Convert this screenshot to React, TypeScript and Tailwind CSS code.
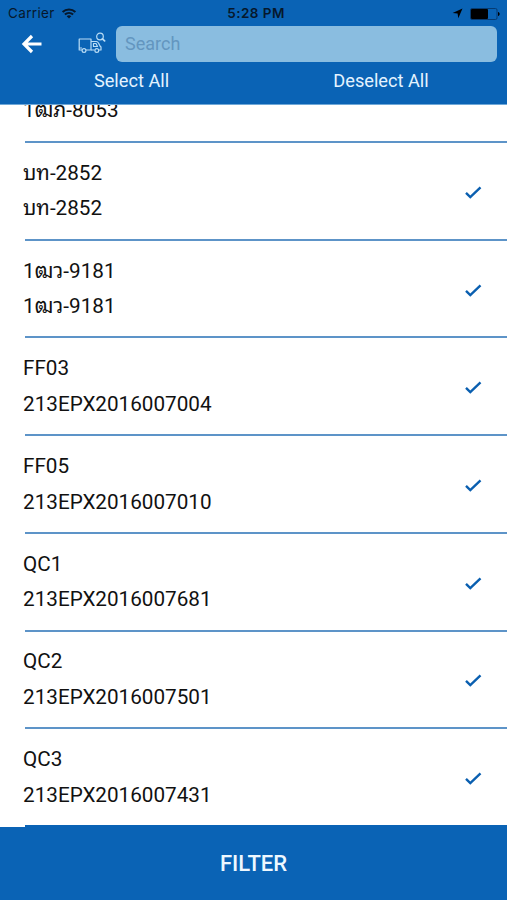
import { useState } from 'react';

type Vehicle = {
    id: number;
    name: string;
    code: string;
};

const vehicles: Vehicle[] = [
    { id: 2, name: 'บท-2852', code: 'บท-2852' },
    { id: 3, name: '1ฒว-9181', code: '1ฒว-9181' },
    { id: 4, name: 'FF03', code: '213EPX2016007004' },
    { id: 5, name: 'FF05', code: '213EPX2016007010' },
    { id: 6, name: 'QC1', code: '213EPX2016007681' },
    { id: 7, name: 'QC2', code: '213EPX2016007501' },
    { id: 8, name: 'QC3', code: '213EPX2016007431' },
];

function StatusBar() {
    return (
        <div className="grid h-[27px] grid-cols-3 items-center pl-[8px] pr-[7px] font-['Inter','Liberation_Sans',sans-serif] text-[13.5px] text-[#06182c]">
            <div className="flex items-center gap-[6px]">
                <span className="tracking-[0.35px]">Carrier</span>
                <svg className="h-[11px] w-[16px]" viewBox="0 0 16 12" fill="none" stroke="currentColor">
                    <path d="M1 4.3a10.2 10.2 0 0 1 14 0" strokeWidth="2.2" />
                    <path d="M3.5 7.1a6.6 6.6 0 0 1 9 0" strokeWidth="2.2" />
                    <path d="M8 11.5 5.5 9a3.6 3.6 0 0 1 5 0z" fill="currentColor" stroke="none" />
                </svg>
            </div>
            <span className="pl-[4px] text-center font-semibold tracking-[0.45px]">5:28 PM</span>
            <div className="flex items-center justify-end gap-[7px] text-black">
                <svg className="h-[11px] w-[11px]" viewBox="0 0 11 11" fill="currentColor">
                    <path d="M10.5.5 6.3 10.3 5.6 5.5.6 4.9z" />
                </svg>
                <svg className="h-[12px] w-[30px]" viewBox="0 0 30 12">
                    <rect x=".5" y=".5" width="26.5" height="11" rx="1.5" fill="none" stroke="#063b72" />
                    <rect x="1" y="1" width="17" height="10" rx="1" fill="currentColor" />
                    <path d="M28 4c2.2.6 2.2 3.4 0 4z" fill="currentColor" />
                </svg>
            </div>
        </div>
    );
}

function TruckSearchIcon() {
    return (
        <svg className="h-[22px] w-[28px]" viewBox="0 0 28 22" fill="none" stroke="#b9dcf5" strokeWidth="1.2" strokeLinejoin="round">
            {/* Truck */}
            <path d="M4 18H1.2V7H13v11H8M1.2 16H4" />
            <path d="M13 9.5h5.500c2 0 2.500 2.500 3.500 4.500l1 1v3h-2M13 18h3.500" />
            <path d="M15.500 11.500h2.500l1.500 3h-4z" />
            <circle cx="6" cy="18.500" r="1.900" />
            <circle cx="18.800" cy="18.500" r="1.900" />
            {/* Magnifier */}
            <circle cx="22" cy="4.500" r="3.300" />
            <path d="m24.400 6.900 2.200 2" strokeWidth="1.800" strokeLinecap="round" />
        </svg>
    );
}

function CheckIcon() {
    return (
        <svg className="h-[13px] w-[17px]" viewBox="0 0 17 13" fill="none" stroke="#0a5fb0" strokeWidth="2.4">
            <path d="m1 6.8 4.3 4.2L15.5 1.3" />
        </svg>
    );
}

export default function App() {
    const [search, setSearch] = useState('');
    const [selected, setSelected] = useState<number[]>(vehicles.map((v) => v.id));

    const toggle = (id: number) => {
        setSelected((prev) => (prev.includes(id) ? prev.filter((x) => x !== id) : [...prev, id]));
    };

    return (
        <div className="flex h-[900px] w-[507px] flex-col overflow-hidden bg-white font-['Roboto','Noto_Sans_Thai_Looped','Noto_Sans_Thai','Loma','Garuda','Waree','Umpush','FreeSans',sans-serif]">
            <header className="h-[105px] shrink-0 border-b border-[#6fa8d8] bg-[#0a63b5]">
                <StatusBar />
                <div className="flex h-[34px] items-center pl-[21px] pr-[10px]">
                    <button aria-label="Back">
                        <svg className="h-[20px] w-[22px]" viewBox="0 0 22 20" fill="none" stroke="white" strokeWidth="3.2">
                            <path d="M20.5 10H3M11 2 3 10l8 8" />
                        </svg>
                    </button>
                    <div className="ml-[35px] mr-[10px] pb-[3px]">
                        <TruckSearchIcon />
                    </div>
                    <input
                        value={search}
                        onChange={(e) => setSearch(e.target.value)}
                        placeholder="Search"
                        className="h-[36px] min-w-0 flex-1 rounded-[6px] bg-[#8abde0] px-[9px] pb-[2px] text-[18px] text-[#0b3c6b] outline-none placeholder:text-[#6396bf]"
                    />
                </div>
                <div className="flex h-[38px] text-[18.2px] leading-[40px] text-[#e4f3ff]">
                    <button className="w-[263px]" onClick={() => setSelected(vehicles.map((v) => v.id))}>
                        Select All
                    </button>
                    <button className="w-[236px]" onClick={() => setSelected([])}>
                        Deselect All
                    </button>
                </div>
            </header>

            <main className="flex min-h-0 flex-1 flex-col overflow-hidden">
                {/* Row scrolled under the header */}
                <div className="flex h-[38px] shrink-0 flex-col justify-end">
                    <p className="mb-[12.5px] pl-[23px] text-[20.7px] leading-[35.5px] text-[#111]">1ฒภ-8053</p>
                    <div className="ml-[25px] h-[2px] shrink-0 bg-[#5d94c8]" />
                </div>
                {vehicles.map((v) => (
                    <div key={v.id} className="group h-[97.72px] shrink-0" onClick={() => toggle(v.id)}>
                        <div className="flex h-[95.72px] items-center justify-between pl-[23px] pr-[25px] pt-[1px]">
                            <div className="text-[20.7px] leading-[35.5px] text-[#111]">
                                <p>{v.name}</p>
                                <p>{v.code}</p>
                            </div>
                            {selected.includes(v.id) && (
                                <div className="pt-[2px]">
                                    <CheckIcon />
                                </div>
                            )}
                        </div>
                        <div className="ml-[25px] h-[2px] bg-[#5d94c8] group-last:bg-[#0a63b5]" />
                    </div>
                ))}
            </main>

            <button className="h-[73px] shrink-0 bg-[#0a63b5] text-[22px] font-medium text-[#eef8ff]">FILTER</button>
        </div>
    );
}
